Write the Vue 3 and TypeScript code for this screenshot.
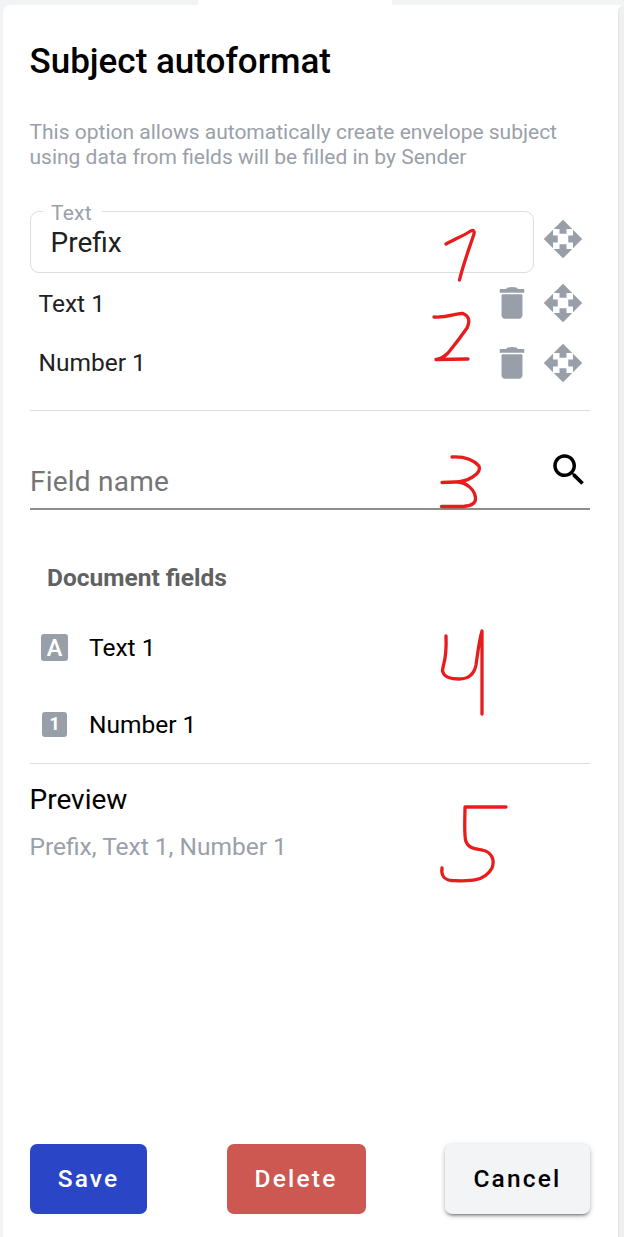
<script setup lang="ts">
interface Field {
  id: string
  label: string
  glyph: string
}

const fields: Field[] = [
  { id: 'text', label: 'Text 1', glyph: 'A' },
  { id: 'number', label: 'Number 1', glyph: '1' },
]

const prefix = 'Prefix'
const preview = [prefix, ...fields.map((f) => f.label)].join(', ')

const movePath =
  'M12 1l5.300 5.300H14V9h-4V6.300H6.700zM23 12l-5.300 5.300V14H15v-4h2.700V6.700zM12 23l-5.300-5.300H10V15h4v2.700h3.300zM1 12l5.300-5.300V10H9v4H6.300v3.300z'
const deletePath =
  'M6 19c0 1.1.9 2 2 2h8c1.1 0 2-.9 2-2V7.6l-.5-.6h-11l-.5.6zM19 4h-3.500l-1-.8q-2.500-.6-5 0l-1 .8H5v2.200h14z'
const searchPath =
  'M15.5 14h-.79l-.28-.27C15.41 12.59 16 11.11 16 9.5 16 5.91 13.09 3 9.500 3S3 5.91 3 9.500 5.91 16 9.500 16c1.610 0 3.090-.59 4.230-1.570l.27.28v.79l5 4.990L20.490 19l-4.990-5zm-6 0C7.010 14 5 11.990 5 9.500S7.010 5 9.500 5 14 7.010 14 9.500 11.990 14 9.500 14z'

const strokes: string[] = [
  'M446 244C455 239 463 236 469 232Q475 228 474 234C469 249 463 265 459.500 280',
  'M434 317C449 318 455 313 463 313.500Q472 317 467 328C460 338 453 347 448 353Q442 359 436 359.500L468 359',
  'M452 457C462 456.500 472 458 479 466C482 474 467 482 455 482L442 482.500M458 482C467 483 475 490 475.500 498C476 505 468 506.500 460 506.500H441.500',
  'M446 636C447 662 443 662 442.500 671C444 678 453 679 459 679C467 679 474 675 476 665C478 651 479 641 482 631L482 714',
  'M506 807H465C465 820 464 830 465.500 840C468 849 476 849 482 850C492 852 495 860 492 868C484 883 466 881 451 880.500C443 879 441 875 442 868',
]
</script>

<template>
  <div class="page">
    <div class="tab"></div>
    <div class="side"></div>
    <main class="panel">
      <h1>Subject autoformat</h1>
      <p class="hint">
        This option allows automatically create envelope subject<br />using data from fields will be filled in by Sender
      </p>

      <div class="prefix-row">
        <div class="outlined">
          <label>Text</label>
          <span>{{ prefix }}</span>
        </div>
        <svg class="icon" viewBox="0 0 24 24"><path :d="movePath" /></svg>
      </div>

      <div v-for="f in fields" :key="f.id" class="chosen">
        <span class="name" :class="f.id">{{ f.label }}</span>
        <svg class="icon" viewBox="0 0 24 24"><path :d="deletePath" /></svg>
        <svg class="icon" viewBox="0 0 24 24"><path :d="movePath" /></svg>
      </div>

      <div class="search">
        <span>Field name</span>
        <svg class="icon dark" viewBox="0 0 24 24"><path :d="searchPath" /></svg>
      </div>

      <h2>Document fields</h2>
      <div class="list">
        <div v-for="f in fields" :key="f.id" class="item">
          <span class="badge-slot"><i class="badge" :class="f.id">{{ f.glyph }}</i></span>
          <span>{{ f.label }}</span>
        </div>
      </div>

      <section class="preview">
        <h3>Preview</h3>
        <p>{{ preview }}</p>
      </section>

      <footer>
        <button class="save">Save</button>
        <button class="delete">Delete</button>
        <button class="cancel">Cancel</button>
      </footer>
    </main>

    <svg class="ink" viewBox="0 0 624 1237">
      <path v-for="(d, i) in strokes" :key="i" :d="d" />
    </svg>
  </div>
</template>

<style>
body {
  margin: 0;
}
</style>

<style scoped>
* {
  box-sizing: border-box;
}
.page {
  position: relative;
  width: 624px;
  height: 1237px;
  overflow: hidden;
  padding: 5px 0 0 3px;
  background: #f2f3f5;
  font-family: Roboto, 'Liberation Sans', sans-serif;
  color: #000;
}
.tab {
  position: absolute;
  left: 198px;
  top: 0;
  width: 194px;
  height: 5px;
  background: #fff;
}
.panel {
  display: flex;
  flex-direction: column;
  width: 621px;
  height: 1232px;
  padding: 34px 34px 23px 27px;
  background: #fff;
  border-radius: 7px 0 0 0;
}
.side {
  position: absolute;
  z-index: 1;
  left: 618px;
  top: 5px;
  width: 12px;
  height: 1240px;
  background: #f0f0f0;
  border-left: 1px solid #e4e4e4;
  border-radius: 7px 0 0 0;
}
h1,
h2,
h3,
p {
  margin: 0;
}
h1 {
  height: 46px;
  margin-left: -0.5px;
  font-size: 35px;
  line-height: 46px;
  font-weight: 500;
  white-space: nowrap;
}
.hint {
  height: 50px;
  margin: 35px 0 0 -0.5px;
  font-size: 21px;
  line-height: 25px;
  color: #9aa0a9;
  white-space: nowrap;
}
.prefix-row {
  display: flex;
  height: 62px;
  margin-top: 41px;
  justify-content: space-between;
}
.outlined {
  position: relative;
  width: 504px;
  height: 62px;
  padding: 14px 19.5px 0;
  border: 1px solid #dcdddf;
  border-radius: 9px;
  font-size: 28px;
  line-height: 34px;
  color: #212121;
}
.outlined label {
  position: absolute;
  left: 12px;
  top: -11px;
  padding: 0 10px 0 8px;
  background: #fff;
  font-size: 21px;
  line-height: 25px;
  letter-spacing: 0.2px;
  color: #9aa0a9;
}
.icon {
  display: block;
  flex: none;
  width: 42px;
  height: 42px;
  fill: #999fa8;
}
.prefix-row .icon {
  margin: 7px 5.6px 0 0;
}
.chosen {
  display: flex;
  align-items: center;
  height: 60px;
  padding: 0 5.6px 0 8.5px;
  gap: 9px;
  font-size: 24.5px;
  color: #212121;
}
.chosen .name {
  flex: 1;
}
.chosen .name.number {
  padding-bottom: 2px;
}
.search {
  display: flex;
  justify-content: space-between;
  height: 100px;
  margin-top: 17px;
  padding-top: 38px;
  border-top: 1px solid #dcdddf;
  border-bottom: 2px solid #8d8d8d;
  font-size: 28px;
  line-height: 66px;
  letter-spacing: 0.22px;
  color: #757575;
}
.search .dark {
  fill: #000;
  margin-right: 0.3px;
}
h2 {
  height: 34px;
  margin: 51px 0 0 17px;
  font-size: 24.5px;
  line-height: 34px;
  font-weight: 700;
  color: #616161;
}
.list {
  height: 169px;
  padding-top: 14px;
  border-bottom: 1px solid #dcdddf;
}
.item {
  display: flex;
  align-items: center;
  height: 77px;
  font-size: 24.5px;
}
.badge-slot {
  display: flex;
  justify-content: center;
  width: 49px;
  margin-right: 10px;
}
.badge {
  display: block;
  width: 27px;
  height: 27px;
  border-radius: 3px;
  background: #999fa8;
  color: #fff;
  text-align: center;
  font-style: normal;
  font-weight: 500;
  font-size: 23.5px;
  line-height: 28px;
}
.badge.number {
  width: 25px;
  height: 25px;
  font-size: 18.7px;
  line-height: 25px;
  font-weight: 700;
}
.preview h3 {
  margin: 18px 0 0 -0.5px;
  font-size: 28px;
  line-height: 36px;
  font-weight: 400;
}
.preview p {
  margin: 13px 0 0 -0.5px;
  font-size: 24.5px;
  line-height: 32px;
  color: #9aa0a9;
}
footer {
  display: flex;
  justify-content: space-between;
  margin-top: auto;
}
button {
  height: 70px;
  padding: 0 0 2px;
  border: 0;
  border-radius: 7px;
  font: 500 24.5px Roboto, sans-serif;
  letter-spacing: 2.19px;
  color: #fff;
}
.save {
  width: 117px;
  background: #2a46c6;
}
.delete {
  width: 139px;
  background: #cd5852;
}
.cancel {
  width: 145px;
  background: #f3f4f6;
  color: #000;
  box-shadow: 0 3px 3px -2px rgba(0, 0, 0, 0.4), 0 2px 4px rgba(0, 0, 0, 0.2), 0 1px 7px rgba(0, 0, 0, 0.1);
}
.ink {
  position: absolute;
  z-index: 2;
  left: 0;
  top: 0;
  width: 624px;
  height: 1237px;
  fill: none;
  stroke: #e81c1c;
  stroke-width: 3.3;
  stroke-linecap: round;
  stroke-linejoin: round;
  pointer-events: none;
}
</style>
